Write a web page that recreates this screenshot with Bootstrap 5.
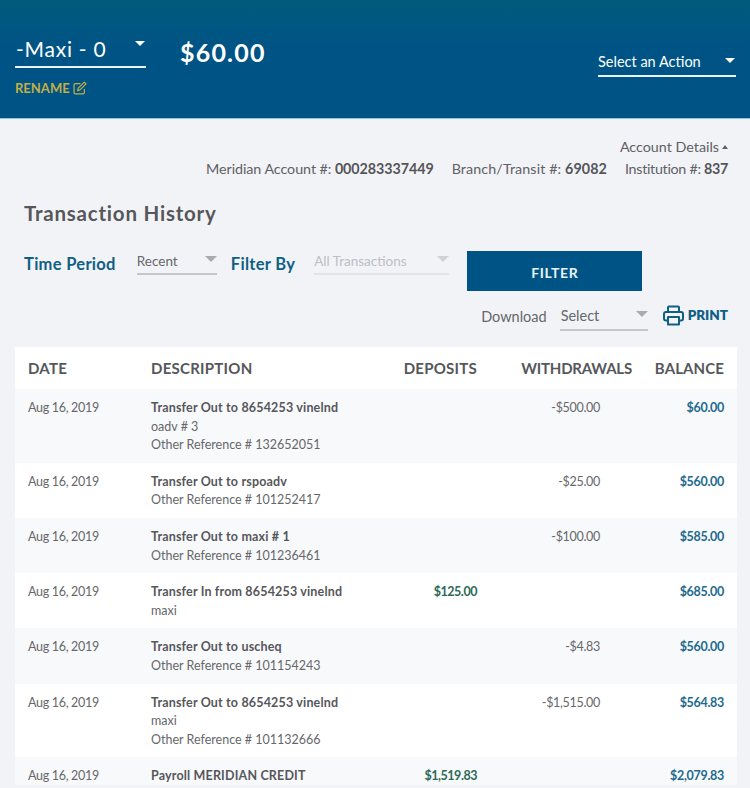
<!DOCTYPE html>
<html lang="en">
<head>
<meta charset="utf-8">
<title>Transaction History</title>
<link rel="stylesheet" href="https://cdn.jsdelivr.net/npm/bootstrap@5.3.0/dist/css/bootstrap.min.css">
<style>
html,body{height:788px;overflow:hidden}
body{background:#f2f3f7;font-family:"Lato","Liberation Sans",sans-serif;color:#5a5a5c}
.acct-head{height:119px;background:linear-gradient(#005a7c,#005485 40%,#005485);border-bottom:1px solid #8fc3dc;padding:36px 14px 0 15px;color:#fff}
.acct-pick{width:131px;height:32px;border-bottom:2px solid #eaf4f7;font-size:21px;line-height:26px;padding-left:1px;letter-spacing:.75px}
.caret-w{width:0;height:0;border-left:5px solid transparent;border-right:5px solid transparent;border-top:5px solid #fff}
.caret-g{width:0;height:0;border-left:6px solid transparent;border-right:6px solid transparent;border-top:6px solid #a8abb0}
.acct-pick .caret-w{margin:5px 1px 0 0}
.rename{font-size:13px;font-weight:700;color:#c2ae45;margin-top:11px;line-height:18px}
.rename svg{margin-left:3px}
.acct-amt{font-size:25px;font-weight:700;line-height:30px;margin-left:34px;letter-spacing:1.2px;padding-top:1px}
.acct-action{width:138px;height:28px;margin-top:13px;margin-left:auto;border-bottom:2px solid #eaf4f7;font-size:14.5px;line-height:20px;align-self:flex-start;padding:3px 0 0 0}
.acct-action .caret-w{margin-top:6px;margin-right:1px}
.acct-info{padding:18px 22px 0 15px;font-size:14.3px;line-height:20px;color:#606164;text-align:right}
.acct-info b{color:#55565a}
.acct-info .caret-up{display:inline-block;width:0;height:0;border-left:3.5px solid transparent;border-right:3.5px solid transparent;border-bottom:4px solid #606164;margin:0 0 3px 3px}
.acct-nums{margin-top:2px;gap:18px}
.num-mer{letter-spacing:-.06px}
.num-bra{letter-spacing:.1px}
.num-ins{letter-spacing:-.3px}
.page-ttl{font-size:20.5px;font-weight:700;color:#56575b;margin:20px 0 0 24px;line-height:28px;letter-spacing:.78px}
.filt-row{margin:14px 0 0 24px;height:56px}
.filt-lbl{font-size:16.5px;font-weight:700;color:#0f5f85;line-height:22px;padding-top:12px;letter-spacing:.3px}
.sel-box{height:24px;border-bottom:2px solid #c4c6ca;font-size:13.5px;line-height:20px;color:#66676a;margin-top:10px}
.sel-box .caret-g{margin-top:5px;margin-right:0}
.sel-recent{width:80px;margin-left:21px;margin-right:14px}
.sel-all{width:135px;margin-left:19px;color:#bdbfc3;border-bottom-color:#e3e4e8}
.sel-all .caret-g{border-top-color:#cfd1d5}
.btn-filt{width:175px;height:40px;margin-left:18px;margin-top:10px;background:#005485;color:#e8f3f7;border:0;border-radius:0;font-size:14px;font-weight:700;letter-spacing:.6px;padding:2px 0 0}
.dl-row{margin:0 22px 0 0;height:50px;font-size:14.5px}
.dl-lbl{padding-top:11px;line-height:28px;margin-top:-5px;color:#66676a}
.sel-dl{width:88px;margin:8px 15px 0 13px;height:26px;line-height:22px;font-size:14.5px;padding-left:1px}
.sel-dl .caret-g{margin-top:6px}
.print-lnk{color:#0f5f85;font-weight:800;font-size:13.5px;line-height:22px;margin-top:7px}
.print-lnk svg{margin-right:4px}
.tx-wrap{margin:0 13px 0 15px;background:#fff;height:438px;overflow:hidden}
.tx-tbl{table-layout:fixed;width:722px;margin:0;--bs-table-bg:transparent;border-collapse:collapse}
.tx-tbl th{height:42px;padding:0 13px 0 0;vertical-align:middle;font-size:15px;font-weight:700;color:#56575b;border:0;white-space:nowrap;letter-spacing:.25px}
.tx-tbl th.th-first{padding-left:13px}
.tx-tbl th.th-desc{padding-left:13px}
.tx-tbl th.th-wd{letter-spacing:-.2px}
.tx-tbl th.th-bal{letter-spacing:.1px}
.tx-tbl td{padding:10px 13px 8px;vertical-align:top;font-size:12.5px;line-height:18.6px;color:#66676a;border:0;background:transparent}
.tx-tbl tbody tr:nth-child(odd){background:#f8f9fb}
.tx-tbl .d-main{display:block;font-weight:700;color:#56575b;letter-spacing:.17px}
.tx-tbl .tx-when{letter-spacing:-.3px}
.tx-tbl .wd{padding-right:45px;letter-spacing:-.3px}
.tx-tbl .dep{font-weight:700;color:#2c6a57;letter-spacing:-.45px}
.tx-tbl .bal{font-weight:700;color:#1e6a8e;letter-spacing:-.3px}
.w-date{width:123px}.w-desc{width:243px}.w-dep{width:109px}.w-wd{width:155px}.w-bal{width:92px}
</style>
</head>
<body>
<header class="acct-head d-flex align-items-start">
  <div>
    <div class="acct-pick d-flex justify-content-between">
      <span>-Maxi - 0</span><span class="caret-w"></span>
    </div>
    <div class="rename d-flex align-items-center">RENAME
      <svg width="14" height="14" viewBox="0 0 16 16" fill="none" stroke="#c2ae45" stroke-width="1.4" stroke-linejoin="round" stroke-linecap="round"><path d="M13 9.500V13.200a1.600 1.600 0 0 1-1.600 1.600H2.800a1.600 1.600 0 0 1-1.600-1.600V4.600A1.600 1.600 0 0 1 2.800 3H8"/><path d="M12.900 1.300l2 2L8 10.200l-2.700.7.7-2.700z"/></svg>
    </div>
  </div>
  <div class="acct-amt">$60.00</div>
  <div class="acct-action d-flex justify-content-between">
    <span>Select an Action</span><span class="caret-w"></span>
  </div>
</header>

<section class="acct-info">
  <div>Account Details<span class="caret-up"></span></div>
  <div class="acct-nums d-flex justify-content-end">
    <span class="num-mer">Meridian Account #: <b>000283337449</b></span>
    <span class="num-bra">Branch/Transit #: <b>69082</b></span>
    <span class="num-ins">Institution #: <b>837</b></span>
  </div>
</section>

<h1 class="page-ttl">Transaction History</h1>

<div class="filt-row d-flex align-items-start">
  <span class="filt-lbl">Time Period</span>
  <div class="sel-box sel-recent d-flex justify-content-between"><span>Recent</span><span class="caret-g"></span></div>
  <span class="filt-lbl">Filter By</span>
  <div class="sel-box sel-all d-flex justify-content-between"><span>All Transactions</span><span class="caret-g"></span></div>
  <button type="button" class="btn btn-filt">FILTER</button>
</div>

<div class="dl-row d-flex justify-content-end align-items-start">
  <span class="dl-lbl">Download</span>
  <div class="sel-box sel-dl d-flex justify-content-between"><span>Select</span><span class="caret-g"></span></div>
  <a class="print-lnk d-flex align-items-center text-decoration-none" href="#">
    <svg width="21" height="21" viewBox="0 0 21 21" fill="none" stroke="#0f5f85" stroke-width="2" stroke-linejoin="round"><path d="M5 7V2.500a1 1 0 0 1 1-1h9a1 1 0 0 1 1 1V7"/><path d="M5 15.500H3a2 2 0 0 1-2-2V9a2 2 0 0 1 2-2h15a2 2 0 0 1 2 2v4.500a2 2 0 0 1-2 2h-2"/><path d="M5 12h11v7.500H5z"/></svg>PRINT
  </a>
</div>

<div class="tx-wrap">
  <table class="table tx-tbl">
    <colgroup><col class="w-date"><col class="w-desc"><col class="w-dep"><col class="w-wd"><col class="w-bal"></colgroup>
    <thead><tr><th class="th-first">DATE</th><th class="th-desc">DESCRIPTION</th><th class="text-end">DEPOSITS</th><th class="text-end th-wd">WITHDRAWALS</th><th class="text-end th-bal">BALANCE</th></tr></thead>
    <tbody>
      <tr><td class="tx-when">Aug 16, 2019</td><td><span class="d-main">Transfer Out to 8654253 vinelnd</span>oadv # 3<br>Other Reference # 132652051</td><td></td><td class="text-end wd">-$500.00</td><td class="text-end bal">$60.00</td></tr>
      <tr><td class="tx-when">Aug 16, 2019</td><td><span class="d-main">Transfer Out to rspoadv</span>Other Reference # 101252417</td><td></td><td class="text-end wd">-$25.00</td><td class="text-end bal">$560.00</td></tr>
      <tr><td class="tx-when">Aug 16, 2019</td><td><span class="d-main">Transfer Out to maxi # 1</span>Other Reference # 101236461</td><td></td><td class="text-end wd">-$100.00</td><td class="text-end bal">$585.00</td></tr>
      <tr><td class="tx-when">Aug 16, 2019</td><td><span class="d-main">Transfer In from 8654253 vinelnd</span>maxi</td><td class="text-end dep">$125.00</td><td></td><td class="text-end bal">$685.00</td></tr>
      <tr><td class="tx-when">Aug 16, 2019</td><td><span class="d-main">Transfer Out to uscheq</span>Other Reference # 101154243</td><td></td><td class="text-end wd">-$4.83</td><td class="text-end bal">$560.00</td></tr>
      <tr><td class="tx-when">Aug 16, 2019</td><td><span class="d-main">Transfer Out to 8654253 vinelnd</span>maxi<br>Other Reference # 101132666</td><td></td><td class="text-end wd">-$1,515.00</td><td class="text-end bal">$564.83</td></tr>
      <tr><td class="tx-when">Aug 16, 2019</td><td><span class="d-main">Payroll MERIDIAN CREDIT</span></td><td class="text-end dep">$1,519.83</td><td></td><td class="text-end bal">$2,079.83</td></tr>
    </tbody>
  </table>
</div>
</body>
</html>
